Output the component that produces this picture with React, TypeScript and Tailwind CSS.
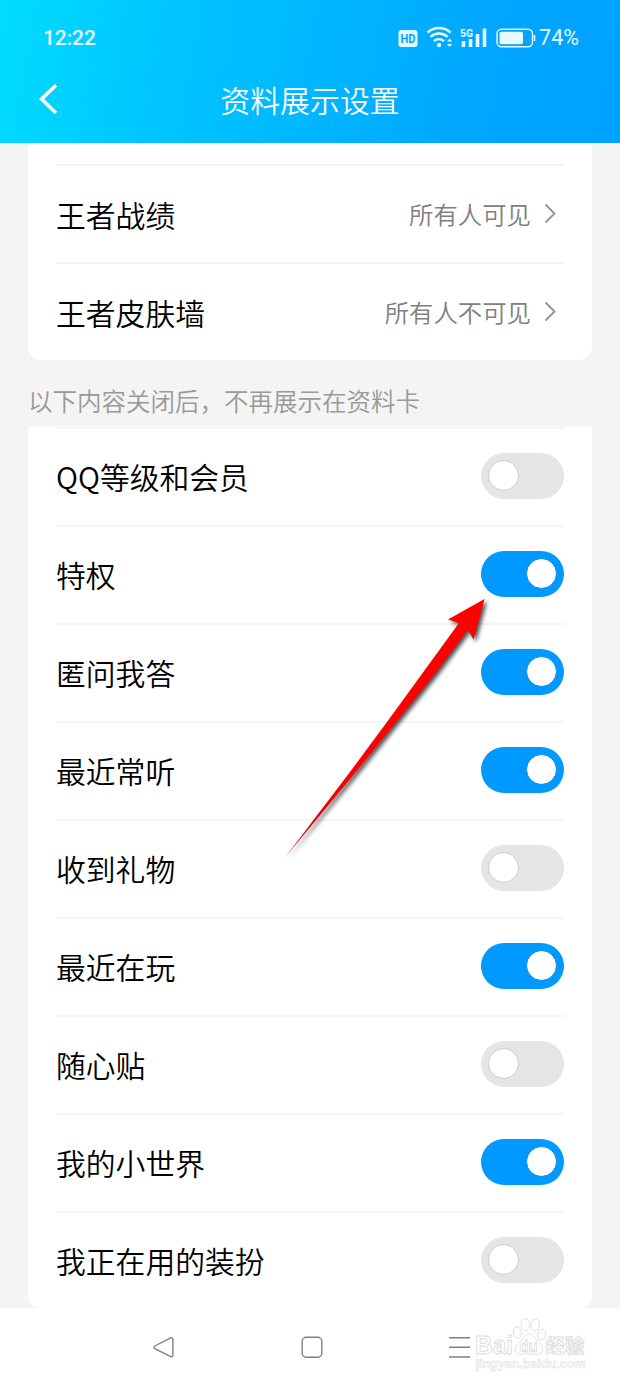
import { useState } from "react";

const VISIBILITY = [
  { label: "王者战绩", value: "所有人可见" },
  { label: "王者皮肤墙", value: "所有人不可见" },
];

const SWITCHES = [
  { label: "QQ等级和会员", on: false },
  { label: "特权", on: true },
  { label: "匿问我答", on: true },
  { label: "最近常听", on: true },
  { label: "收到礼物", on: false },
  { label: "最近在玩", on: true },
  { label: "随心贴", on: false },
  { label: "我的小世界", on: true },
  { label: "我正在用的装扮", on: false },
];

function StatusBar() {
  return (
    <div className="flex h-[76px] items-center pr-[41px] pl-[43px] font-['Roboto',sans-serif] text-[#e6faff]">
      <span className="flex-1 pt-[2px] text-[21px] font-medium tracking-[-0.1px]">12:22</span>
      <svg width="138" height="28" viewBox="0 0 138 28" fill="none">
        <rect x="0.5" y="6" width="19" height="17" rx="3" fill="currentColor" />
        <text x="10" y="19" textAnchor="middle" fontSize="12.5" fontWeight="700" textLength="15" lengthAdjust="spacingAndGlyphs" fill="#00a5ff">
          HD
        </text>
        <g stroke="currentColor" strokeWidth="2.5">
          <path d="M29.5 8.6a17 17 0 0 1 23 0" />
          <path d="M32.5 12.9a12.5 12.5 0 0 1 17 0" />
          <path d="M35.8 17.1a8 8 0 0 1 10.2 0" />
        </g>
        <circle cx="41" cy="21" r="2.2" fill="currentColor" />
        <path d="M49 17.5 51.6 14.5 54.2 17.5ZM49 20 51.6 23 54.2 20Z" fill="currentColor" />
        <text x="62" y="12.5" fontSize="11.5" fontWeight="700" textLength="13" lengthAdjust="spacingAndGlyphs" fill="currentColor">
          5G
        </text>
        <path d="M65.5 17v6M72.5 15v8M79.5 10V23M86.5 4.5v18.5" stroke="currentColor" strokeWidth="3.6" />
        <rect x="99" y="5.2" width="35.5" height="17.5" rx="4.5" stroke="currentColor" strokeWidth="1.5" />
        <rect x="101.5" y="7.8" width="23.5" height="12.5" rx="2" fill="currentColor" />
        <path d="M136.500 11v6" stroke="currentColor" strokeWidth="1.6" />
      </svg>
      <span className="ml-[3px] text-[21.5px] leading-none">74%</span>
    </div>
  );
}

function Header() {
  return (
    <header className="h-[143px] bg-[linear-gradient(100deg,#00dcff_0%,#00c5ff_27%,#00b4ff_55%,#00a5ff_80%,#00a2ff_100%)]">
      <StatusBar />
      <div className="grid h-[46px] grid-cols-[1fr_auto_1fr] items-center">
        <svg className="ml-[38px]" width="22" height="34" viewBox="0 0 22 34" fill="none">
          <path d="M18 3.3 3.6 17 18 31" stroke="white" strokeWidth="3.6" />
        </svg>
        <h1 className="text-[29.9px] font-[350] text-white">资料展示设置</h1>
      </div>
    </header>
  );
}

function Toggle({ initial, label }: { initial: boolean; label: string }) {
  const [on, setOn] = useState(initial);
  return (
    <button
      role="switch"
      aria-checked={on}
      aria-label={label}
      onClick={() => setOn(!on)}
      className={`mb-[2px] flex h-[46px] w-[83px] items-center rounded-full px-[7px] ${
        on ? "justify-end bg-[#0099ff]" : "justify-start bg-[#e5e5e5]"
      }`}
    >
      <span
        className={`mb-px h-[31px] w-[31px] rounded-full border bg-white ${
          on ? "border-[#0d8bea]" : "border-[#cccccc]"
        }`}
      />
    </button>
  );
}

function Watermark() {
  return (
    <g fill="#fff" stroke="#dcdcdc" strokeWidth="0.9" fontFamily="Liberation Sans, sans-serif" fontWeight="700">
      <text x="475" y="46" fontSize="25" textLength="38" lengthAdjust="spacingAndGlyphs">
        Bai
      </text>
      <ellipse cx="517.3" cy="24.5" rx="4.1" ry="5.7" transform="rotate(-10 517.3 24.5)" />
      <ellipse cx="525.3" cy="16.7" rx="4.4" ry="5.9" />
      <ellipse cx="535.3" cy="17" rx="4.2" ry="5.9" transform="rotate(10 535.3 17)" />
      <ellipse cx="541.7" cy="26.7" rx="4.1" ry="5.4" transform="rotate(15 541.7 26.7)" />
      <path d="M529 26C533 26 534 30 537 33C540 36 543 38 542.7 42C542.3 45.500 539.500 46.600 536 46.500C533 46.200 531 45.800 529 45.800C527 45.800 525 46.200 522 46.500C518 46.600 515.500 45 515.300 41.500C515 38 518 36 521 33C524 30 525 26 529 26Z" />
      <text x="519.5" y="44" fontSize="16" textLength="18" lengthAdjust="spacingAndGlyphs">
        du
      </text>
      <text x="545.5" y="44.5" fontSize="19.5" fontFamily="Noto Sans CJK SC, sans-serif">
        经验
      </text>
      <text x="475.5" y="59.5" fontSize="12.5" fill="#f8f8f8" stroke="#e4e4e4" strokeWidth="0.5" textLength="110" lengthAdjust="spacingAndGlyphs">
        jingyan.baidu.com
      </text>
    </g>
  );
}

function NavBar() {
  return (
    <nav className="flex h-[78px] items-center bg-white">
      <svg width="620" height="78" viewBox="0 0 620 78" fill="none" stroke="#808080" strokeWidth="1.4">
        <path d="M170.7 29.9 154.8 38Q153 39.3 154.8 40.6L170.7 48.6Q172.9 49.2 172.9 47V31.5Q172.9 29.3 170.7 29.9Z" />
        <rect x="302.2" y="29.3" width="19.6" height="20" rx="4" />
        <path d="M449 29.7h21M449 39.3h21M449 49h21" />
        <Watermark />
      </svg>
    </nav>
  );
}

// Red pointer laid over the list, aimed at the 特权 switch
const POINTER = "M214.5 19 178 39.5 189 43 117 142 80 192 15 277.5 85 193 126 142 167 91 198 49.5 203.5 59.5Z";

function Pointer() {
  return (
    <svg
      className="pointer-events-none absolute top-[580px] left-[270px]"
      width="240"
      height="290"
      viewBox="0 0 240 290"
    >
      <defs>
        <linearGradient id="tail" gradientUnits="userSpaceOnUse" x1="15" y1="277" x2="80" y2="192">
          <stop offset="0" stopColor="#c04040" />
          <stop offset="0.4" stopColor="#e00000" />
          <stop offset="1" stopColor="#ff0000" />
        </linearGradient>
        <filter id="soft" x="-10%" y="-10%" width="120%" height="120%">
          <feGaussianBlur stdDeviation="2" />
        </filter>
      </defs>
      <path d={POINTER} transform="translate(2.5 2.5)" fill="#000" opacity="0.7" filter="url(#soft)" />
      <path d={POINTER} fill="url(#tail)" />
    </svg>
  );
}

export default function App() {
  return (
    <div className="relative h-[1386px] w-[620px] overflow-hidden bg-[#f4f4f4] font-['Noto_Sans_CJK_SC',sans-serif] text-black">
      <Header />
      <main className="h-[1165px] px-7">
        <section className="rounded-b-[14px] bg-white px-7 pt-[21px]">
          {VISIBILITY.map((item) => (
            <div key={item.label} className="flex h-[98px] items-center border-t-2 border-[#f5f5f5]">
              <span className="flex-1 pt-px text-[29.8px] leading-none font-[350]">{item.label}</span>
              <span className="text-[24.4px] leading-none font-[350] text-[#808080]">{item.value}</span>
              <svg className="mr-[6px] ml-[11px]" width="16" height="22" viewBox="0 0 16 22" fill="none">
                <path d="M3.5 1.5 12.5 10.5 3.5 19.5" stroke="#969696" strokeWidth="2" />
              </svg>
            </div>
          ))}
        </section>
        <p className="flex h-[67px] items-center pt-[15px] text-[24.5px] leading-none font-[350] text-[#999999]">
          以下内容关闭后，不再展示在资料卡
        </p>
        <section className="rounded-b-[14px] bg-white px-7">
          {SWITCHES.map((item) => (
            <div key={item.label} className="flex h-[98px] items-center border-t-2 border-[#f5f5f5]">
              <span className="flex-1 text-[29.8px] leading-none font-[350]">{item.label}</span>
              <Toggle initial={item.on} label={item.label} />
            </div>
          ))}
        </section>
      </main>
      <NavBar />
      <Pointer />
    </div>
  );
}
